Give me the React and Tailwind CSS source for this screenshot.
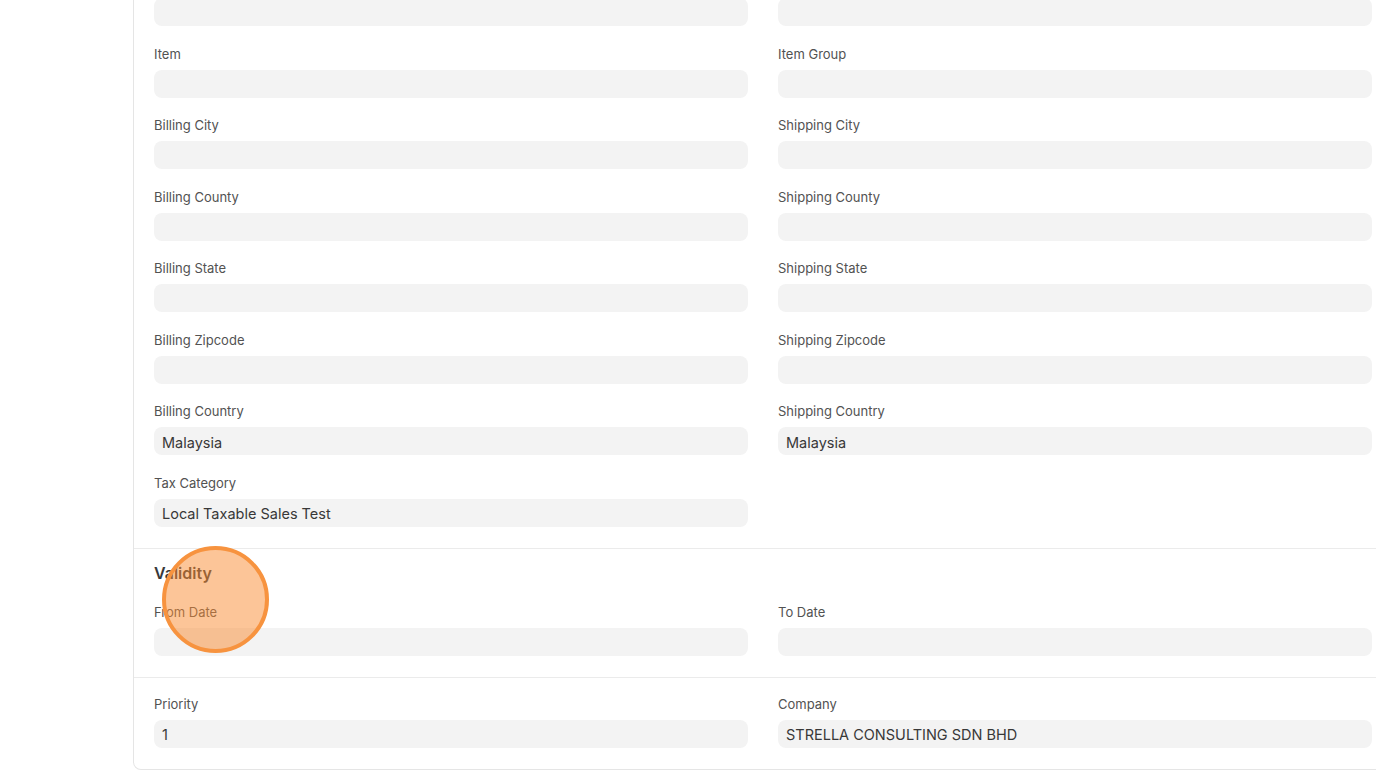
import React from "react";

function Field({ label, value }) {
  return (
    <div className="flex flex-col">
      <div className="h-4 text-[13px] leading-4 text-[#525252] mb-2 whitespace-nowrap">{label}</div>
      <div className="h-7 rounded-lg bg-[#f3f3f3] px-2 flex items-center text-[14.5px] text-[#383838] pt-[3px]">
        {value || ""}
      </div>
    </div>
  );
}

function Empty() {
  return <div />;
}

export default function App() {
  return (
    <div
      className="relative w-[1376px] h-[770px] overflow-hidden bg-white"
      style={{ fontFamily: "Inter, 'Noto Sans', sans-serif" }}
    >
      <div className="ml-[133px] w-[1260px] -mt-[46px] border border-t-0 border-[#e5e5e5] rounded-b-lg">
        <div className="px-5 pt-5 pb-[21px] grid grid-cols-2 gap-x-[30px] gap-y-[19.5px]">
          <Field label="" />
          <Field label="" />
          <Field label="Item" />
          <Field label="Item Group" />
          <Field label="Billing City" />
          <Field label="Shipping City" />
          <Field label="Billing County" />
          <Field label="Shipping County" />
          <Field label="Billing State" />
          <Field label="Shipping State" />
          <Field label="Billing Zipcode" />
          <Field label="Shipping Zipcode" />
          <Field label="Billing Country" value="Malaysia" />
          <Field label="Shipping Country" value="Malaysia" />
          <Field label="Tax Category" value="Local Taxable Sales Test" />
          <Empty />
        </div>
        <div className="border-t border-[#ebebeb] px-5 pt-[12px] pb-[21px]">
          <div className="h-6 leading-6 text-[16px] font-semibold text-[#383838] mb-[19px]">Validity</div>
          <div className="grid grid-cols-2 gap-x-[30px]">
            <Field label="From Date" />
            <Field label="To Date" />
          </div>
        </div>
        <div className="border-t border-[#ebebeb] px-5 pt-[18px] pb-[21px]">
          <div className="grid grid-cols-2 gap-x-[30px]">
            <Field label="Priority" value="1" />
            <Field label="Company" value="STRELLA CONSULTING SDN BHD" />
          </div>
        </div>
      </div>
      <div className="absolute left-[162px] top-[546px] w-[107px] h-[107px] rounded-full border-4 border-[#f7933f] bg-[rgba(250,140,50,0.5)]" />
    </div>
  );
}
